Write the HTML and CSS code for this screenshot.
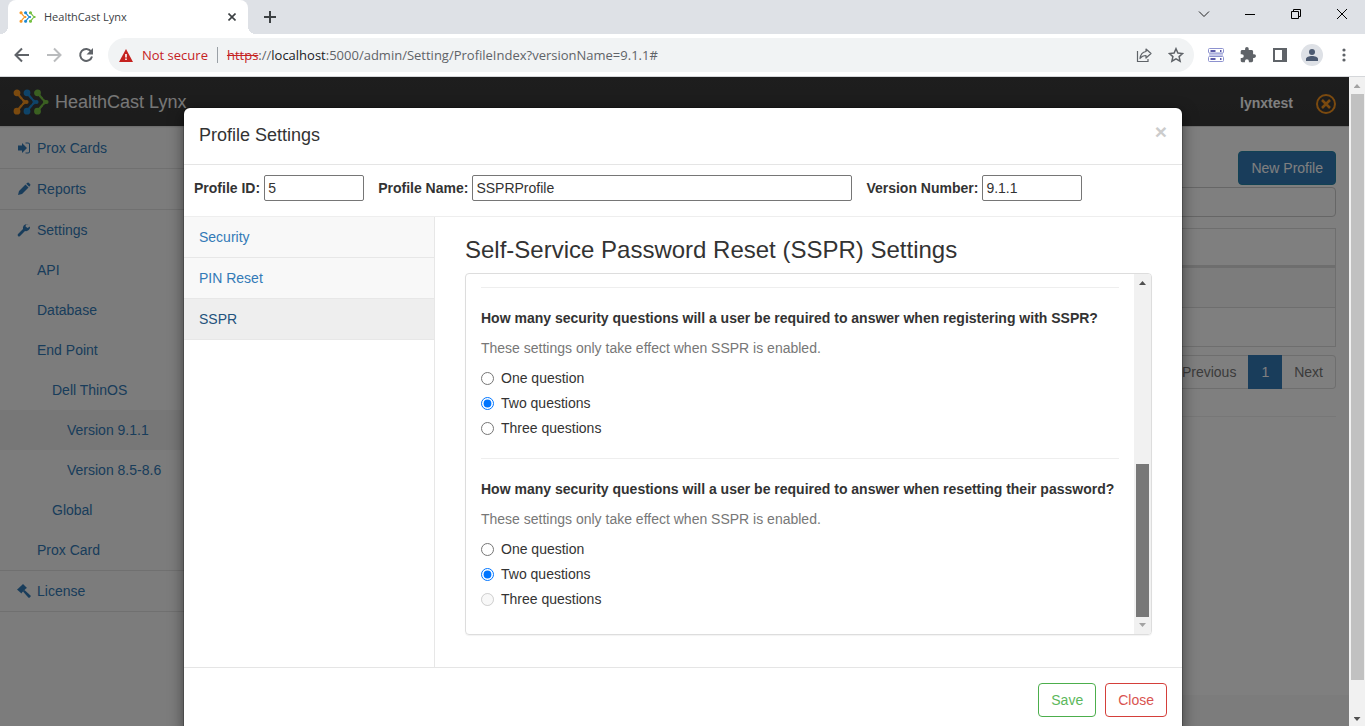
FILE: index.html
```html
<!DOCTYPE html>
<html lang="en">
<head>
<meta charset="utf-8">
<title>HealthCast Lynx</title>
<link rel="stylesheet" href="styles.css">
</head>
<body>
<svg class="defs" aria-hidden="true">
  <defs>
    <symbol id="logo" viewBox="0 0 36 26">
      <g stroke-width="2.200" stroke-linejoin="round">
        <g stroke="#f7941e" fill="#f7941e"><path fill="none" d="M4 4l5 6M4 22l5-6"/><path d="M8 8.500c1.500 2 3.500 3 6 4.500-2.500 1.500-4.500 2.500-6 4.500l2.500-4.500z" stroke-width="1.200"/><circle cx="4" cy="3.800" r="2.300"/><circle cx="4" cy="22.200" r="2.300"/><circle cx="13.500" cy="13" r="1"/></g>
        <g stroke="#1e88d2" fill="#1e88d2"><path fill="none" d="M14 4l5 6M14 22l5-6"/><path d="M18 8.500c1.500 2 3.500 3 6 4.500-2.500 1.500-4.500 2.500-6 4.500l2.500-4.500z" stroke-width="1.200"/><circle cx="14" cy="3.800" r="2.300"/><circle cx="14" cy="22.200" r="2.300"/><circle cx="23.500" cy="13" r="1"/></g>
        <g stroke="#76c043" fill="#76c043"><path fill="none" d="M24.500 4l5 6M24.500 22l5-6"/><path d="M28.500 8.500c1.500 2 3.500 3 6 4.500-2.500 1.500-4.500 2.500-6 4.500l2.500-4.500z" stroke-width="1.200"/><circle cx="24.500" cy="3.800" r="2.300"/><circle cx="24.500" cy="22.200" r="2.300"/><circle cx="33.500" cy="13" r="1"/></g>
      </g>
    </symbol>
  </defs>
</svg>

<header class="browser">
  <div class="tabstrip">
    <div class="tab">
      <svg class="favicon" width="17" height="12"><use href="#logo"/></svg>
      <span class="tab-title">HealthCast Lynx</span>
      <button class="tab-close" aria-label="Close tab"><svg width="8" height="8" viewBox="0 0 8 8"><path d="M.5.5l7 7M7.500.5l-7 7" stroke="#3c4043" stroke-width="1.600"/></svg></button>
    </div>
    <button class="newtab" aria-label="New tab"><svg width="12" height="12" viewBox="0 0 12 12"><path d="M6 0v12M0 6h12" stroke="#3c4043" stroke-width="2"/></svg></button>
    <div class="window-controls">
      <button aria-label="Search tabs"><svg width="12" height="12" viewBox="0 0 12 12"><path d="M1 3.500l5 5 5-5" fill="none" stroke="#222"/></svg></button>
      <button aria-label="Minimize"><svg width="10" height="10" viewBox="0 0 10 10"><path d="M0 5.500h10" stroke="#000"/></svg></button>
      <button aria-label="Restore"><svg width="10" height="10" viewBox="0 0 10 10"><path d="M.5 2.500h7v7h-7zM2.500 2.500v-2h7v7h-2" fill="none" stroke="#000"/></svg></button>
      <button aria-label="Close window"><svg width="10" height="10" viewBox="0 0 10 10"><path d="M0 0l10 10M10 0L0 10" stroke="#000"/></svg></button>
    </div>
  </div>
  <div class="toolbar">
    <button class="tool" aria-label="Back"><svg width="16" height="16" viewBox="0 0 16 16"><path d="M15 8H2M8 1.500L1.500 8 8 14.500" fill="none" stroke="#5f6368" stroke-width="2"/></svg></button>
    <button class="tool" aria-label="Forward"><svg width="16" height="16" viewBox="0 0 16 16"><path d="M1 8h13M8 1.500L14.500 8 8 14.500" fill="none" stroke="#babcbe" stroke-width="2"/></svg></button>
    <button class="tool reload" aria-label="Reload"><svg width="16" height="16" viewBox="0 0 16 16"><path d="M13.200 4.600A6 6 0 1 0 14 9.500" fill="none" stroke="#5f6368" stroke-width="2"/><path d="M15 1v6.500H8.500z" fill="#5f6368"/></svg></button>
    <div class="omnibox">
      <svg width="14" height="13" viewBox="0 0 14 13"><path d="M7 0l7 13H0z" fill="#c5221f"/><path d="M7 5v3.500M7 9.500v1.500" stroke="#fff" stroke-width="1.600"/></svg>
      <span class="not-secure">Not secure</span>
      <span class="url"><s>https</s><i>://</i>localhost<i>:5000/admin/Setting/ProfileIndex?versionName=9.1.1#</i></span>
      <button class="tool" aria-label="Share"><svg width="16" height="16" viewBox="0 0 16 16" fill="none" stroke="#5f6368" stroke-width="1.200"><path d="M1.500 4v10.500h10.500V12"/><path d="M10 2l5 4.500-5 4.500V8.500C7.500 8.500 5.500 9.500 4 11.500 4.500 7.500 6.500 5 10 4.500z" stroke-linejoin="round"/></svg></button>
      <button class="tool" aria-label="Bookmark"><svg width="16" height="16" viewBox="0 0 16 16"><path d="M8 1.700l1.900 4.300 4.700.5-3.500 3.100 1 4.600L8 11.800l-4.100 2.400 1-4.600L1.400 6.500l4.700-.5z" fill="none" stroke="#5f6368" stroke-width="1.500"/></svg></button>
    </div>
    <button class="tool" aria-label="Server extension"><svg width="16" height="16" viewBox="0 0 16 16"><path d="M1 6h14v3H1z" fill="#c5c8e8"/><rect x=".5" y="1.500" width="15" height="4.500" rx="1" fill="#fff" stroke="#8d92cf"/><rect x=".5" y="9.500" width="15" height="5" rx="1" fill="#fff" stroke="#8d92cf"/><path d="M2.500 4h5M12 4h1.500M2.500 12h5M12 12h1.500" stroke="#26268a" stroke-width="1.300"/></svg></button>
    <button class="tool" aria-label="Extensions"><svg width="16" height="16" viewBox="1 1 22 22"><path d="M20.500 11H19V7c0-1.100-.9-2-2-2h-4V3.500a2.500 2.500 0 0 0-5 0V5H4c-1.100 0-2 .9-2 2v3.800h1.500a2.700 2.700 0 0 1 0 5.400H2V20c0 1.100.9 2 2 2h3.800v-1.500a2.700 2.700 0 0 1 5.400 0V22H17c1.100 0 2-.9 2-2v-4h1.500a2.500 2.500 0 0 0 0-5z" fill="#5f6368"/></svg></button>
    <button class="tool" aria-label="Side panel"><svg width="14" height="14" viewBox="0 0 14 14"><path d="M1 1h12v12H1z" fill="#fff" stroke="#5f6368" stroke-width="2"/><path d="M9 0h5v14H9z" fill="#5f6368"/></svg></button>
    <button class="tool" aria-label="Profile"><svg width="22" height="22" viewBox="0 0 22 22"><circle cx="11" cy="11" r="11" fill="#dee1e6"/><circle cx="11" cy="8" r="3" fill="#4c5a71"/><path d="M5 17v-2c0-2 3-3 6-3s6 1 6 3v2z" fill="#4c5a71"/></svg></button>
    <button class="tool" aria-label="Menu"><svg width="4" height="14" viewBox="0 0 4 14" fill="#5f6368"><circle cx="2" cy="2" r="1.600"/><circle cx="2" cy="7" r="1.600"/><circle cx="2" cy="12" r="1.600"/></svg></button>
  </div>
</header>

<div class="viewport">
  <div class="app">
    <nav class="navbar">
      <a class="brand" href="#"><svg width="36" height="26"><use href="#logo"/></svg>HealthCast Lynx</a>
      <span class="user">lynxtest</span>
      <button class="logout" aria-label="Log out"><svg width="22" height="22" viewBox="0 0 22 22" fill="none" stroke="#f7941e" stroke-width="2"><circle cx="11" cy="11" r="9"/><path d="M7 7l8 8M15 7l-8 8" stroke-width="2.500"/></svg></button>
    </nav>
    <div class="columns">
      <ul class="sidebar">
        <li class="top"><a href="#"><svg width="14" height="14" viewBox="0 0 14 14" fill="#337ab7"><path d="M1 4.500h4V2l5 5-5 5V9.500H1z"/><path d="M8.500 1.500H11a2 2 0 0 1 2 2v7a2 2 0 0 1-2 2H8.500v-1H11a1 1 0 0 0 1-1v-7a1 1 0 0 0-1-1H8.500z"/></svg>Prox Cards</a></li>
        <li class="top"><a href="#"><svg width="14" height="14" viewBox="0 0 14 14" fill="#337ab7"><path d="M1 13l1-4 6.500-6.500 3 3L5 12zM9.200 1.800L10.500.8q.6-.4 1.200 0l1.500 1.500q.5.600 0 1.200L12.200 4.800z"/></svg>Reports</a></li>
        <li class="top"><a href="#"><svg width="14" height="14" viewBox="0 0 14 14" fill="#337ab7"><path d="M10 1a4 4 0 0 0-4 5L1 11q-.8 1 0 2t2 0l5-5a4 4 0 0 0 5-4.500l-2.500 1.500-2-1.500.5-2L11.500 1z"/></svg>Settings</a>
          <ul>
            <li><a href="#">API</a></li>
            <li><a href="#">Database</a></li>
            <li><a href="#">End Point</a>
              <ul>
                <li><a href="#">Dell ThinOS</a>
                  <ul>
                    <li><a class="current" href="#">Version 9.1.1</a></li>
                    <li><a href="#">Version 8.5-8.6</a></li>
                  </ul>
                </li>
                <li><a href="#">Global</a></li>
              </ul>
            </li>
            <li><a href="#">Prox Card</a></li>
          </ul>
        </li>
        <li class="top"><a href="#"><svg width="14" height="14" viewBox="0 0 14 14" fill="#337ab7"><path d="M6 0l4 4-1 .5L5 8.500 4.500 9.500 0 5.500l1-.8L5 1z"/><path d="M7.500 6L13.500 11.500q.5.600 0 1.200l-1 1q-.6.300-1 0L6 7.500z"/></svg>License</a></li>
      </ul>
      <main class="main">
        <button class="new-profile">New Profile</button>
        <input class="filter" type="text" aria-label="Filter">
        <table class="grid">
          <thead><tr><th></th></tr></thead>
          <tbody><tr class="odd"><td></td></tr><tr><td></td></tr></tbody>
        </table>
        <div class="pages"><a href="#">Previous</a><a class="active" href="#">1</a><a href="#">Next</a></div>
        <hr class="rule">
        <footer class="page-footer"></footer>
      </main>
    </div>
    <div class="backdrop"></div>
  </div>
  <div class="scrollbar page-scroll"><i class="arrow up faint"></i><i class="thumb"></i><i class="arrow down"></i></div>

  <div class="modal-layer">
    <section class="modal" role="dialog" aria-labelledby="modal-title">
      <div class="modal-header">
        <h4 id="modal-title">Profile Settings</h4>
        <button class="dismiss" aria-label="Close">×</button>
      </div>
      <form class="profile">
        <div class="field"><label for="pid">Profile ID:</label><input id="pid" type="text" value="5"></div>
        <div class="field wide"><label for="pname">Profile Name:</label><input id="pname" type="text" value="SSPRProfile"></div>
        <div class="field"><label for="ver">Version Number:</label><input id="ver" type="text" value="9.1.1"></div>
      </form>
      <div class="modal-body">
        <nav class="sections">
          <a href="#">Security</a>
          <a href="#">PIN Reset</a>
          <a class="selected" href="#">SSPR</a>
        </nav>
        <div class="content">
          <h3>Self-Service Password Reset (SSPR) Settings</h3>
          <div class="panel">
            <div class="panel-content">
              <fieldset>
                <legend>How many security questions will a user be required to answer when registering with SSPR?</legend>
                <p>These settings only take effect when SSPR is enabled.</p>
                <label><input type="radio" name="reg">One question</label>
                <label><input type="radio" name="reg" checked>Two questions</label>
                <label><input type="radio" name="reg">Three questions</label>
              </fieldset>
              <fieldset>
                <legend>How many security questions will a user be required to answer when resetting their password?</legend>
                <p>These settings only take effect when SSPR is enabled.</p>
                <label><input type="radio" name="reset">One question</label>
                <label><input type="radio" name="reset" checked>Two questions</label>
                <label><input type="radio" name="reset" disabled>Three questions</label>
              </fieldset>
            </div>
            <div class="scrollbar panel-scroll"><i class="arrow up"></i><i class="thumb"></i><i class="arrow down faint"></i></div>
          </div>
        </div>
      </div>
      <div class="modal-footer">
        <button class="save">Save</button>
        <button class="close">Close</button>
      </div>
    </section>
  </div>
</div>
</body>
</html>
```
FILE: styles.css
```css
* { box-sizing: border-box; }
html, body { height: 100%; }
body {
  margin: 0;
  display: flex;
  flex-direction: column;
  overflow: hidden;
  font: 14px/20px "Liberation Sans", Arial, sans-serif;
  color: #333;
  background: #fff;
}
a { color: #337ab7; text-decoration: none; }
button, input { font: inherit; color: inherit; }
button { border: 0; background: none; padding: 0; }
svg { display: block; flex: none; }
ul { list-style: none; margin: 0; padding: 0; }
.defs { position: absolute; width: 0; height: 0; }

/* Browser frame */
.browser { flex: none; font-family: "Open Sans", sans-serif; border-bottom: 1px solid #d5d7da; }
.tabstrip { display: flex; height: 34px; padding-left: 8px; background: #dee1e6; }
.tab {
  position: relative;
  display: flex;
  align-items: center;
  width: 240px;
  padding: 0 12px 0 11px;
  background: #fff;
  border-radius: 8px 8px 0 0;
}
.tab::before, .tab::after {
  content: "";
  position: absolute;
  bottom: 0;
  width: 8px;
  height: 8px;
}
.tab::before { right: 100%; background: radial-gradient(circle at 0 0, #dee1e6 8px, #fff 8px); }
.tab::after { left: 100%; background: radial-gradient(circle at 100% 0, #dee1e6 8px, #fff 8px); }
.tab-title { flex: 1; margin-left: 8px; font-size: 11px; color: #3c4043; }
.newtab { display: grid; place-items: center; width: 28px; margin-left: 8px; }
.window-controls { display: flex; margin-left: auto; height: 28px; }
.window-controls button { display: grid; place-items: center; width: 46px; }
.toolbar { display: flex; align-items: center; height: 42px; padding: 0 5px 0 6px; }
.tool { display: grid; place-items: center; width: 32px; height: 32px; flex: none; }
.reload { margin-right: 6px; }
.omnibox {
  flex: 1;
  display: flex;
  align-items: center;
  height: 34px;
  margin-right: 6px;
  padding: 0 2px 0 11px;
  border-radius: 17px;
  background: #f1f3f4;
  font-size: 13px;
}
.not-secure { margin-left: 9px; padding-right: 9px; color: #c5221f; border-right: 1px solid #9aa0a6; line-height: 16px; }
.url { flex: 1; padding-left: 9px; color: #202124; white-space: nowrap; }
.url i { font-style: normal; color: #5f6368; }
.url s { color: #c5221f; }

/* Page area */
.viewport { flex: 1; position: relative; display: flex; min-height: 0; overflow: hidden; }
.app { flex: 1; position: relative; display: flex; flex-direction: column; }
.backdrop { position: absolute; inset: 0; background: rgba(0, 0, 0, .5); }
.navbar {
  display: flex;
  align-items: center;
  height: 50px;
  padding: 0 12px 0 13px;
  background: linear-gradient(#3c3c3c, #383838);
  border-bottom: 1px solid #ddd;
}
.brand { display: flex; align-items: center; gap: 6px; margin-right: auto; font-size: 18px; color: #eee; }
.user { font-weight: bold; color: #fff; padding-top: 2px; }
.logout { margin: 5px 0 0 22px; }
.columns { flex: 1; display: flex; }
.sidebar { width: 250px; background: #f8f8f8; }
.sidebar > li:first-child { border-top: 1px solid #f0f0f0; }
.sidebar .top { border-bottom: 1px solid #e0e0e0; }
.sidebar a { display: flex; align-items: center; gap: 6px; height: 40px; padding-left: 17px; }
.sidebar ul a { padding-left: 37px; }
.sidebar ul ul a { padding-left: 52px; }
.sidebar ul ul ul a { padding-left: 67px; }
.sidebar .current { background: #eee; }
.main { flex: 1; display: flex; flex-direction: column; padding-top: 24px; }
.main > * { margin-left: 15px; margin-right: 13px; }
.new-profile {
  align-self: flex-end;
  padding: 6px 12px;
  color: #fff;
  background: #337ab7;
  border: 1px solid #2484a8;
  border-radius: 4px;
}
.filter { height: 30px; margin-top: 2px; border: 1px solid #ccc; border-radius: 4px; background: #fff; }
.grid { margin-top: 11px; border-collapse: collapse; border: 1px solid #ddd; }
.grid th { height: 38px; border-bottom: 3px solid #ddd; padding: 0; }
.grid td { height: 39px; border-bottom: 1px solid #ddd; padding: 0; }
.grid .odd { background: #f9f9f9; }
.grid .odd td { height: 41px; }
.pages { display: flex; align-self: flex-end; margin-top: 8px; }
.pages a { padding: 6px 12px; color: #777; border: solid #ddd; border-width: 1px 0; }
.pages a:first-child { border-left-width: 1px; border-radius: 4px 0 0 4px; }
.pages a:last-child { border-right-width: 1px; border-radius: 0 4px 4px 0; }
.pages .active { padding: 6px 13px; color: #fff; background: #337ab7; border-color: #337ab7; }
.rule { width: auto; height: 1px; margin-top: 27px; margin-bottom: 0; border: 0; background: #eee; }
.page-footer { height: 31px; margin: auto 0 0; background: #f8f8f8; }

/* Scroll bars */
.scrollbar { flex: none; display: flex; flex-direction: column; align-items: center; background: #f1f1f1; }
.thumb { width: 13px; background: #c1c1c1; }
.arrow { width: 7px; height: 4px; background: #505050; }
.up { clip-path: polygon(50% 0, 100% 100%, 0 100%); }
.down { clip-path: polygon(0 0, 100% 0, 50% 100%); }
.faint { background: #a3a3a3; }
.page-scroll { width: 16px; padding: 7px 0 5px; gap: 6px; }
.page-scroll .thumb { flex: 1; margin-bottom: 31px; }
.panel-scroll { width: 17px; padding: 7px 0; gap: 6px; border-radius: 0 3px 3px 0; }
.panel-scroll .thumb { height: 153px; margin-top: auto; background: #787878; }

/* Dialog */
.modal-layer { position: absolute; inset: 0; padding: 31px 183px 0 184px; }
.modal {
  background: #fff;
  border-radius: 6px;
  box-shadow: 0 0 0 1px rgba(0, 0, 0, .2), 0 5px 15px rgba(0, 0, 0, .5);
}
.modal-header { display: flex; justify-content: space-between; padding: 14px 15px 16px; border-bottom: 1px solid #e5e5e5; }
h4 { margin: 0; font-size: 18px; font-weight: 400; line-height: 26px; }
.dismiss { font-size: 21px; font-weight: bold; line-height: 20px; color: #ccc; align-self: flex-start; }
.profile { display: flex; gap: 14px; padding: 10px 10px 15px; border-bottom: 1px solid #eee; }
.field { display: flex; align-items: center; gap: 4px; }
.field label { font-weight: bold; }
.field input { width: 100px; height: 26px; padding: 0 3px; border: 1px solid #767676; border-radius: 2px; background: #fff; }
.wide input { width: 380px; }
.modal-body { display: flex; }
.sections { width: 251px; flex: none; border-right: 1px solid #e7e7e7; }
.sections a { display: block; padding: 10px 15px; background: #f8f8f8; border-bottom: 1px solid #e7e7e7; }
.sections .selected { color: #23527c; background: #eee; }
.content { flex: 1; padding: 20px 30px 32px; }
h3 { margin: 0 0 10px; font-size: 24px; font-weight: 400; line-height: 26px; }
.panel { display: flex; border: 1px solid #ddd; border-radius: 4px; box-shadow: 0 1px 1px rgba(0, 0, 0, .05); }
.panel-content { flex: 1; padding: 13px 15px 5px; }
fieldset { margin: 0 0 20px; padding: 20px 0 0; border: 0; border-top: 1px solid #eee; }
legend { float: left; width: 100%; padding: 0; margin-bottom: 10px; font-weight: bold; }
fieldset p { clear: both; margin: 0 0 10px; color: #777; }
fieldset label { display: flex; align-items: center; gap: 7px; }
fieldset label + label { margin-top: 5px; }
fieldset input { width: 13px; height: 13px; margin: 0; }
.modal-footer { display: flex; justify-content: flex-end; gap: 9px; padding: 15px; border-top: 1px solid #e5e5e5; }
.modal-footer button { padding: 6px 12px; border: 1px solid; border-radius: 4px; }
.modal-footer .save { color: #5cb85c; border-color: #4cae4c; }
.modal-footer .close { color: #d9534f; border-color: #d43f3a; }
```
